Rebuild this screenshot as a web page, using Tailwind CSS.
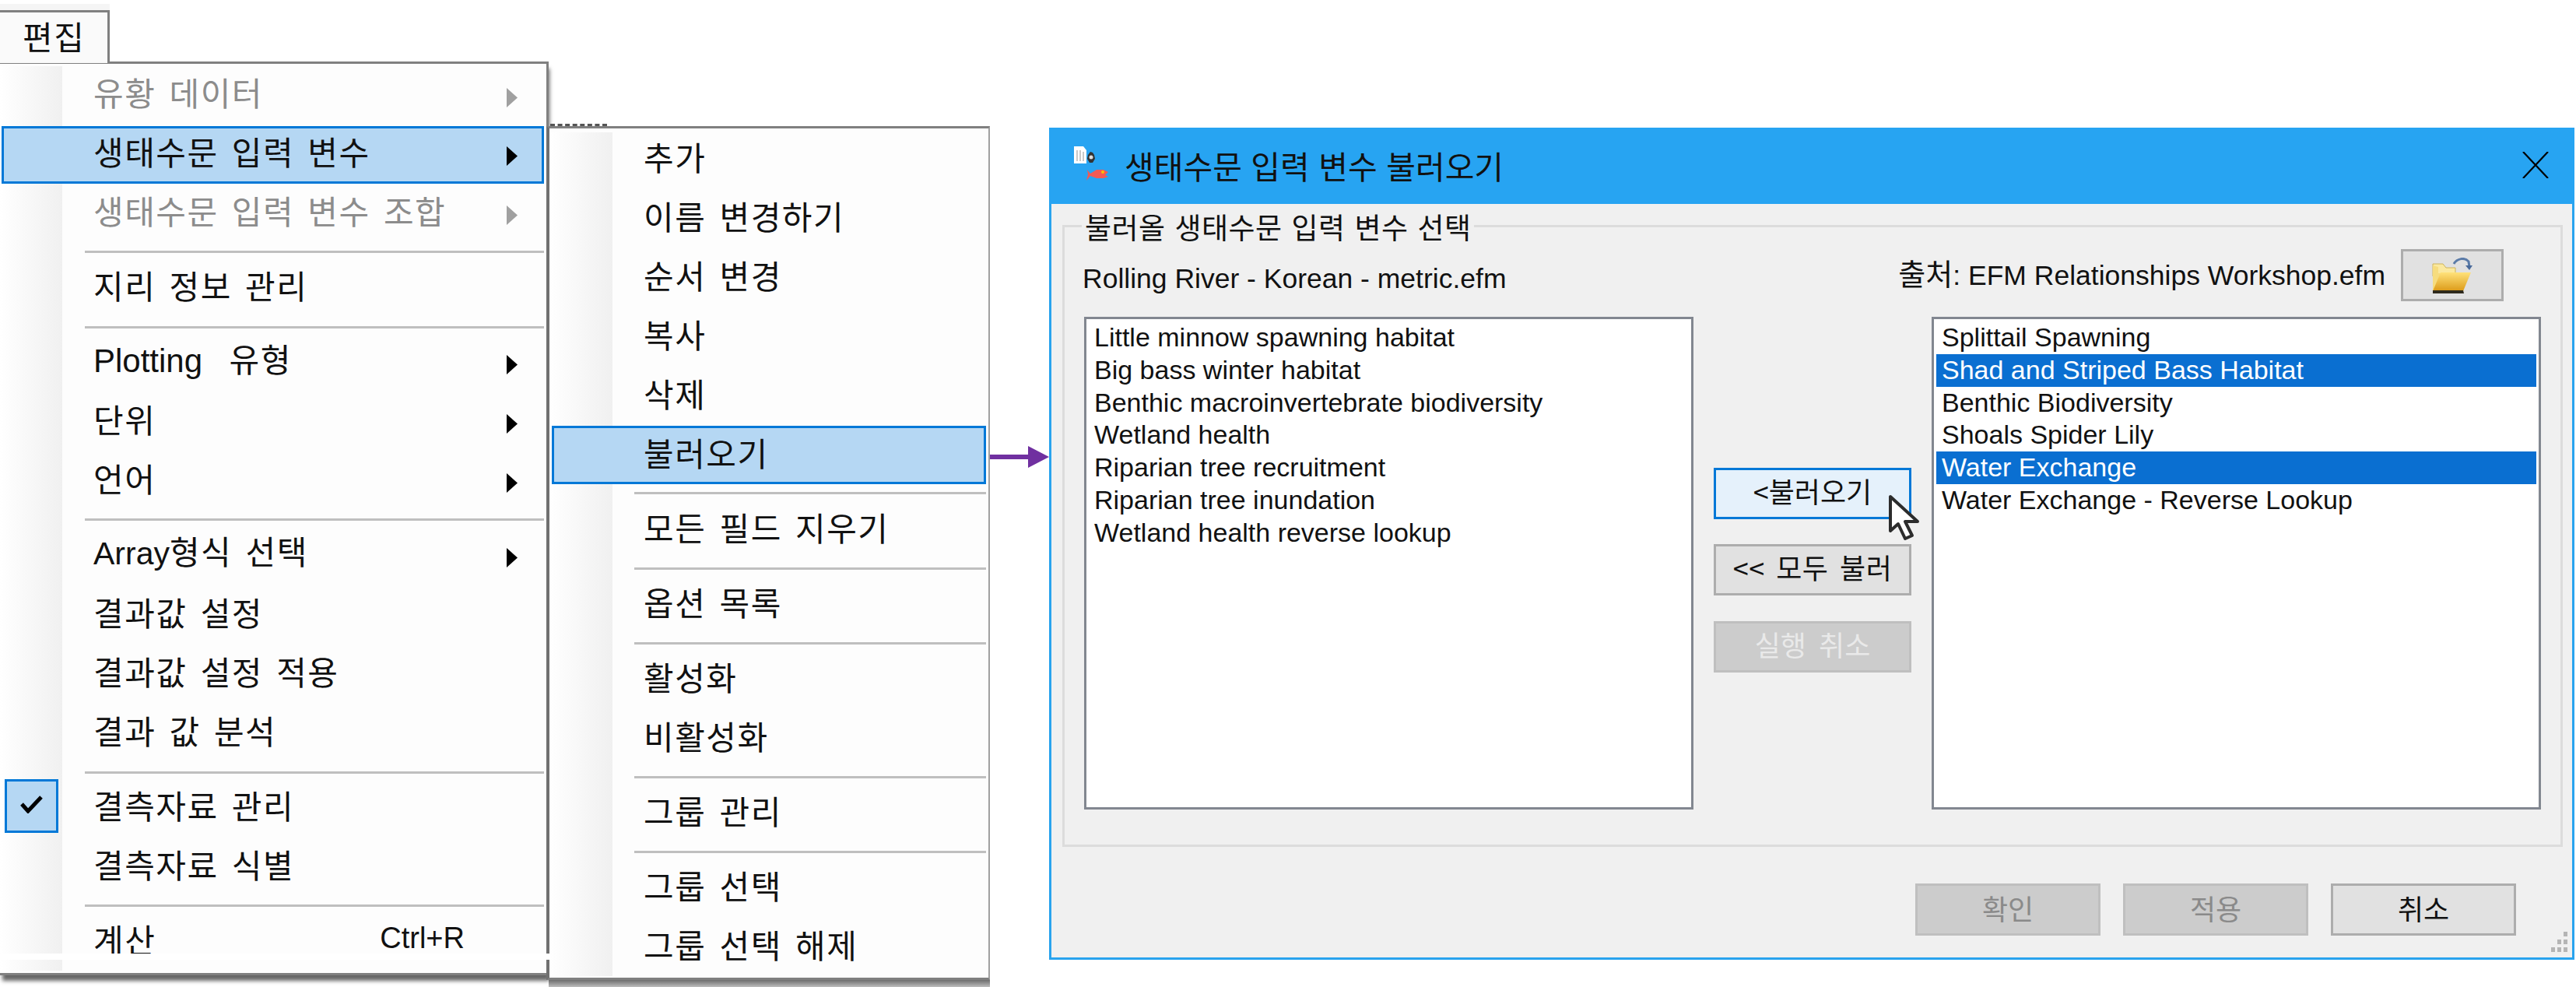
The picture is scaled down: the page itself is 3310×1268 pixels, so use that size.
<!doctype html>
<html lang="ko">
<head>
<meta charset="utf-8">
<script src="https://cdn.jsdelivr.net/npm/@tailwindcss/browser@4"></script>
</head>
<body class="bg-white">
<div class="relative w-[3310px] h-[1268px] overflow-hidden bg-white text-[#111] font-['Liberation_Sans','Noto_Sans_CJK_KR',sans-serif]">

  <!-- Tab -->
  <div class="absolute left-0 top-[5px] w-[141px] h-[9px] bg-[#f5f5f5]"></div>
  <div class="absolute left-0 top-[13px] w-[141px] h-[68px] z-20 bg-[#fafafa] border-t-[3px] border-r-[3px] border-[#808080] text-[42px] tracking-[1.5px] leading-[60px] pl-[29px] font-['Noto_Sans_CJK_KR',sans-serif]">편집</div>

  <!-- Main menu -->
  <div class="absolute left-0 top-[79px] w-[705px] h-[1174px] z-10 bg-[#fdfdfd] border-t-[3px] border-r-[3px] border-b-[3px] border-[#808080] shadow-[2px_8px_5px_-1px_rgba(0,0,0,0.6)] text-[42px] tracking-[1.5px] [word-spacing:4px] font-['Noto_Sans_CJK_KR',sans-serif]">
    <div class="absolute left-0 top-[3px] bottom-[3px] w-[80px] bg-linear-to-r from-white to-[#f0f0f0]"></div>
    <div class="relative flex flex-col [&>div]:pb-[6px]">
      <div class="h-[76px] flex items-center justify-between pl-[120px] pr-[37px] text-[#8c8c8c]"><span>유황 데이터</span><svg width="14" height="25" viewBox="0 0 14 25" class="mt-[16px]"><path d="M0 0L14 12.5L0 25Z" fill="#a0a0a0"/></svg></div>
      <div class="relative h-[76px]">
        <div class="absolute left-[2px] right-[3px] top-[4px] -bottom-[2px] bg-[#b5d7f3] border-[3px] border-[#0078d7]"></div>
        <div class="relative h-full flex items-center justify-between pl-[120px] pr-[37px]"><span>생태수문 입력 변수</span><svg width="14" height="25" viewBox="0 0 14 25" class="mt-[14px]"><path d="M0 0L14 12.5L0 25Z" fill="#000"/></svg></div>
      </div>
      <div class="h-[76px] flex items-center justify-between pl-[120px] pr-[37px] text-[#8c8c8c]"><span>생태수문 입력 변수 조합</span><svg width="14" height="25" viewBox="0 0 14 25" class="mt-[14px]"><path d="M0 0L14 12.5L0 25Z" fill="#a0a0a0"/></svg></div>
      <div class="h-[20px] pt-[12px] pl-[109px] pr-[3px]"><div class="h-[3px] bg-[#bfbfbf]"></div></div>
      <div class="h-[76px] flex items-center pl-[120px]">지리 정보 관리</div>
      <div class="h-[20px] pt-[13px] pl-[109px] pr-[3px]"><div class="h-[3px] bg-[#bfbfbf]"></div></div>
      <div class="h-[76px] flex items-center justify-between pl-[120px] pr-[37px]"><span><span class="font-['Liberation_Sans',sans-serif] text-[42px] tracking-normal">Plotting</span>&nbsp; 유형</span><svg width="14" height="25" viewBox="0 0 14 25" class="mt-[14px]"><path d="M0 0L14 12.5L0 25Z" fill="#000"/></svg></div>
      <div class="h-[76px] flex items-center justify-between pl-[120px] pr-[37px]"><span>단위</span><svg width="14" height="25" viewBox="0 0 14 25" class="mt-[14px]"><path d="M0 0L14 12.5L0 25Z" fill="#000"/></svg></div>
      <div class="h-[76px] flex items-center justify-between pl-[120px] pr-[37px]"><span>언어</span><svg width="14" height="25" viewBox="0 0 14 25" class="mt-[14px]"><path d="M0 0L14 12.5L0 25Z" fill="#000"/></svg></div>
      <div class="h-[20px] pt-[12px] pl-[109px] pr-[3px]"><div class="h-[3px] bg-[#bfbfbf]"></div></div>
      <div class="h-[76px] flex items-center justify-between pl-[120px] pr-[37px]"><span><span class="font-['Liberation_Sans',sans-serif] text-[41px] tracking-normal">Array</span>형식 선택</span><svg width="14" height="25" viewBox="0 0 14 25" class="mt-[14px]"><path d="M0 0L14 12.5L0 25Z" fill="#000"/></svg></div>
      <div class="h-[76px] flex items-center pl-[120px]">결과값 설정</div>
      <div class="h-[76px] flex items-center pl-[120px]">결과값 설정 적용</div>
      <div class="h-[76px] flex items-center pl-[120px]">결과 값 분석</div>
      <div class="h-[20px] pt-[13px] pl-[109px] pr-[3px]"><div class="h-[3px] bg-[#bfbfbf]"></div></div>
      <div class="relative h-[76px] flex items-center pl-[120px]">
        <div class="absolute left-[6px] top-[3px] w-[69px] h-[69px] bg-[#b5d7f3] border-[3px] border-[#0078d7] flex items-center justify-center">
          <svg width="29" height="24" viewBox="0 0 29 24" class="-mt-[6px]"><path d="M2 12L10 21L27 3" fill="none" stroke="#000" stroke-width="5"/></svg>
        </div>
        <span>결측자료 관리</span>
      </div>
      <div class="h-[76px] flex items-center pl-[120px]">결측자료 식별</div>
      <div class="h-[20px] pt-[12px] pl-[109px] pr-[3px]"><div class="h-[3px] bg-[#bfbfbf]"></div></div>
      <div class="h-[76px] flex items-center justify-between pl-[120px] pr-[105px]"><span>계산</span><span class="font-['Liberation_Sans',sans-serif] text-[38px] tracking-normal">Ctrl+R</span></div>
    </div>
  </div>
  <!-- white band across the bottom of the main menu -->
  <div class="absolute left-0 top-[1225px] w-[707px] h-[8px] z-30 bg-white"></div>

  <!-- Sub menu -->
  <div class="absolute left-[707px] top-[159px] w-[73px] h-[3px] z-[16] border-t-[3px] border-dashed border-[#555]"></div>
  <div class="absolute left-[702px] top-[162px] w-[570px] h-[1097px] z-[15] bg-[#fdfdfd] border-t-[3px] border-l-[4px] border-r-[2px] border-b-[3px] border-t-[#808080] border-l-[#707070] border-r-[#a0a0a0] border-b-[#808080] text-[42px] tracking-[1.5px] [word-spacing:4px] font-['Noto_Sans_CJK_KR',sans-serif]">
    <div class="absolute left-0 top-[5px] bottom-[2px] w-[81px] bg-linear-to-r from-white to-[#f0f0f0]"></div>
    <div class="relative flex flex-col pl-[121px] [&>div]:pb-[6px]">
      <div class="h-[76px] flex items-center">추가</div>
      <div class="h-[76px] flex items-center">이름 변경하기</div>
      <div class="h-[76px] flex items-center">순서 변경</div>
      <div class="h-[76px] flex items-center">복사</div>
      <div class="h-[76px] flex items-center">삭제</div>
      <div class="relative h-[76px] -ml-[121px] pl-[121px] flex items-center">
        <div class="absolute left-[3px] right-[3px] top-[2px] -bottom-[1px] bg-[#b5d7f3] border-[3px] border-[#0078d7]"></div>
        <span class="relative">불러오기</span>
      </div>
      <div class="h-[20px] pt-[11px] -ml-[12px] pr-[3px]"><div class="h-[3px] bg-[#bfbfbf]"></div></div>
      <div class="h-[76px] flex items-center">모든 필드 지우기</div>
      <div class="h-[20px] pt-[12px] -ml-[12px] pr-[3px]"><div class="h-[3px] bg-[#bfbfbf]"></div></div>
      <div class="h-[76px] flex items-center">옵션 목록</div>
      <div class="h-[20px] pt-[12px] -ml-[12px] pr-[3px]"><div class="h-[3px] bg-[#bfbfbf]"></div></div>
      <div class="h-[76px] flex items-center">활성화</div>
      <div class="h-[76px] flex items-center">비활성화</div>
      <div class="h-[20px] pt-[12px] -ml-[12px] pr-[3px]"><div class="h-[3px] bg-[#bfbfbf]"></div></div>
      <div class="h-[76px] flex items-center">그룹 관리</div>
      <div class="h-[20px] pt-[12px] -ml-[12px] pr-[3px]"><div class="h-[3px] bg-[#bfbfbf]"></div></div>
      <div class="h-[76px] flex items-center">그룹 선택</div>
      <div class="h-[76px] flex items-center">그룹 선택 해제</div>
    </div>
  </div>
  <div class="absolute left-[705px] top-[1259px] w-[567px] h-[9px] z-[14] bg-linear-to-b from-[#6e6e6e] to-[#bdbdbd]"></div>

  <!-- Purple arrow -->
  <svg class="absolute left-[1272px] top-[573px]" width="76" height="28" viewBox="0 0 76 28"><path d="M0 11H49V0L76 14L49 28V17H0Z" fill="#7030a0"/></svg>

  <!-- Dialog -->
  <div class="absolute left-[1348px] top-[164px] w-[1960px] h-[1069px] bg-[#f0f0f0] flex flex-col border-x-[3px] border-b-[3px] border-[#29a3ee]">
    <div class="h-[98px] -mx-[3px] shrink-0 bg-[#27a4f2] flex items-center pl-[32px] text-[41px] font-['Noto_Sans_CJK_KR',sans-serif]">
      <svg width="44" height="44" viewBox="0 0 44 44" class="-mt-[6px] shrink-0">
        <path d="M0 0H12L16 5V22H0Z" fill="#fff"/>
        <path d="M4 5V19M8 5V19M12 7V19" stroke="#b8b8b8" stroke-width="1.5"/>
        <path d="M18 11l3-4 3 1 2 3 1 5-3 5h-4l-3-5z" fill="#333"/>
        <circle cx="22" cy="14" r="2.5" fill="#ddd"/>
        <path d="M17 30l4 5 8-5h9l6 3-4 4 4 2-6 2h-9l-8-3-5 6 2-8z" fill="#f25a55"/>
        <circle cx="37" cy="33" r="2" fill="#f9c400"/>
      </svg>
      <span class="ml-[21px] leading-none -mt-[2px]">생태수문 입력 변수 불러오기</span>
      <svg width="34" height="34" viewBox="0 0 34 34" class="ml-auto mr-[33px] shrink-0 -mt-[2px]"><path d="M1 0L33 34M33 0L1 34" stroke="#000" stroke-width="2.2" fill="none"/></svg>
    </div>
    <div class="relative flex-1 pt-[27px] pl-[14px] pr-[12px]">
      <!-- Group box -->
      <div class="relative h-[799px] border-[3px] border-[#dcdcdc] grid grid-cols-[783px_254px_783px] grid-rows-[115px_633px] gap-x-[26px] pl-[25px]">
        <div class="absolute left-[22px] -top-[26px] px-[4px] bg-[#f0f0f0] text-[37px] tracking-[0.5px] [word-spacing:1px] leading-[50px] font-['Noto_Sans_CJK_KR',sans-serif]">불러올 생태수문 입력 변수 선택</div>
        <div class="pt-[46px] -ml-[2px] text-[35.5px] leading-[40px]">Rolling River - Korean - metric.efm</div>
        <div class="col-span-2 pt-[28px] pr-[48px] flex justify-end items-start gap-[20px]">
          <span class="text-[35.5px] leading-[67px]"><span class="text-[38px]">출처</span>: EFM Relationships Workshop.efm</span>
          <div class="w-[132px] h-[67px] bg-[#e1e1e1] border-[3px] border-[#adadad] flex items-center justify-center">
            <svg width="52" height="46" viewBox="0 0 52 46">
              <defs><linearGradient id="fo" x1="0" y1="0" x2="0" y2="1"><stop offset="0" stop-color="#ffe27a"/><stop offset="1" stop-color="#dc9a18"/></linearGradient></defs>
              <path d="M1 8H14L18 13H30V24H1Z" fill="#fbe9a0" stroke="#cdb35a" stroke-width="1"/>
              <path d="M1 42V10L8 12V20H36V24L8 42Z" fill="#f6dc7e"/>
              <path d="M11 19H50L40 43H1Z" fill="url(#fo)"/>
              <path d="M1 42H40L41 46H1Z" fill="#2e2a1c"/>
              <path d="M28 8C32 1 42 -1 47 5L48 12" fill="none" stroke="#5b7ba8" stroke-width="3"/>
              <path d="M43 10H52L48 16Z" fill="#4a6a9a"/>
            </svg>
          </div>
        </div>

        <div class="bg-white border-[3px] border-[#828790] pt-[3px] pl-[10px] text-[34px] leading-[41.8px]">
          <div>Little minnow spawning habitat</div>
          <div>Big bass winter habitat</div>
          <div>Benthic macroinvertebrate biodiversity</div>
          <div>Wetland health</div>
          <div>Riparian tree recruitment</div>
          <div>Riparian tree inundation</div>
          <div>Wetland health reverse lookup</div>
        </div>

        <div class="relative pt-[194px] flex flex-col gap-[32px] text-[36px] font-['Noto_Sans_CJK_KR',sans-serif]">
          <div class="h-[66px] bg-[#e5f1fb] border-[3px] border-[#0078d7] flex items-center justify-center leading-none pb-[8px]">&lt;불러오기</div>
          <div class="h-[66px] bg-[#e1e1e1] border-[3px] border-[#adadad] flex items-center justify-center leading-none pb-[8px] [word-spacing:4px] tracking-[0.5px]">&lt;&lt; 모두 불러</div>
          <div class="h-[66px] mt-[1px] bg-[#cccccc] border-[3px] border-[#bfbfbf] text-[#e9e9e9] flex items-center justify-center leading-none pb-[8px] [word-spacing:6px]">실행 취소</div>
          <svg class="absolute left-[224px] top-[228px]" width="42" height="62" viewBox="0 0 42 62"><path d="M3 3V47L13 38L22 57L31 53L22 35H38Z" fill="#fff" stroke="#2c2c2c" stroke-width="4" stroke-linejoin="round"/></svg>
        </div>

        <div class="bg-white border-[3px] border-[#828790] pt-[3px] px-[3px] text-[34px] leading-[41.8px]">
          <div class="pl-[7px]">Splittail Spawning</div>
          <div class="pl-[7px] bg-[#0a6fd1] text-white">Shad and Striped Bass Habitat</div>
          <div class="pl-[7px]">Benthic Biodiversity</div>
          <div class="pl-[7px]">Shoals Spider Lily</div>
          <div class="pl-[7px] bg-[#0a6fd1] text-white">Water Exchange</div>
          <div class="pl-[7px]">Water Exchange - Reverse Lookup</div>
        </div>
      </div>

      <!-- Bottom buttons -->
      <div class="mt-[47px] pr-[60px] flex justify-end gap-[29px] text-[36px] font-['Noto_Sans_CJK_KR',sans-serif]">
        <div class="w-[238px] h-[67px] bg-[#cccccc] border-[3px] border-[#bfbfbf] text-[#8a8a8a] flex items-center justify-center leading-none pb-[6px]">확인</div>
        <div class="w-[238px] h-[67px] bg-[#cccccc] border-[3px] border-[#bfbfbf] text-[#8a8a8a] flex items-center justify-center leading-none pb-[6px]">적용</div>
        <div class="w-[238px] h-[67px] bg-[#e1e1e1] border-[3px] border-[#adadad] flex items-center justify-center leading-none pb-[6px]">취소</div>
      </div>

      <!-- Resize grip -->
      <svg class="absolute right-[5px] bottom-[7px]" width="25" height="26" viewBox="0 0 25 26" fill="#b4b4b4">
        <rect x="19" y="0" width="5" height="6"/><rect x="19" y="10" width="5" height="6"/><rect x="11" y="10" width="5" height="6"/>
        <rect x="19" y="20" width="5" height="6"/><rect x="11" y="20" width="5" height="6"/><rect x="3" y="20" width="5" height="6"/>
      </svg>
    </div>
  </div>
</div>
</body>
</html>
